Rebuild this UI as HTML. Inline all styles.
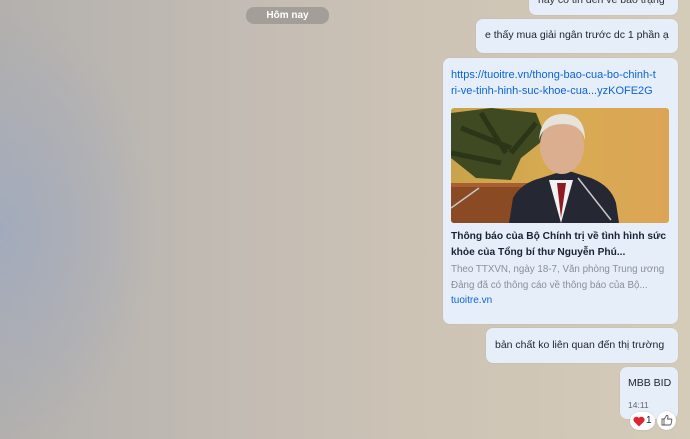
<!DOCTYPE html>
<html><head><meta charset="utf-8"><style>
*{margin:0;padding:0;box-sizing:border-box}
body{width:690px;height:439px;overflow:hidden;position:relative;font-family:"Liberation Sans",sans-serif;font-size:10.5px;color:#1d2430;
background:
radial-gradient(ellipse 160px 220px at 0px 230px, rgba(160,170,190,0.9), rgba(160,170,190,0) 100%),
linear-gradient(90deg,#b3b0ad 0%,#c3bcb4 35%,#cdc3b5 60%,#d5cbb9 100%);}
.b{position:absolute;background:#e6eefa;border-radius:7px;box-shadow:0 0 1px rgba(0,0,0,0.15);right:12px}
.t{position:absolute;white-space:nowrap}
.pill{position:absolute;left:246px;top:7px;width:83px;height:17px;border-radius:8px;background:#a39e98;color:#fff;font-weight:bold;font-size:10px;text-align:center;line-height:17px}
</style></head><body>
<div class="pill">Hôm nay</div>

<div class="b" style="left:529px;top:-10px;height:25px"><span class="t" style="left:9px;top:4px;color:#333">hãy có tin đến về báo trạng</span></div>

<div class="b" style="left:476px;top:19px;height:34px"><span class="t" style="left:9px;top:10px">e thấy mua giải ngân trước dc 1 phần ạ</span></div>

<div class="b" style="left:443px;top:58px;height:266px">
 <div class="t" style="left:8px;top:9px;line-height:16px;font-size:11px;color:#0a64d6">https://tuoitre.vn/thong-bao-cua-bo-chinh-t<br>ri-ve-tinh-hinh-suc-khoe-cua...yzKOFE2G</div>
 <svg style="position:absolute;left:8px;top:50px" width="218" height="115" viewBox="0 0 218 115">
  <defs><linearGradient id="g" x1="0" x2="1"><stop offset="0" stop-color="#c9a34a"/><stop offset="0.5" stop-color="#d8ab52"/><stop offset="1" stop-color="#dca556"/></linearGradient>
  <clipPath id="c"><rect width="218" height="115" rx="3"/></clipPath></defs>
  <g clip-path="url(#c)">
  <rect width="218" height="115" fill="url(#g)"/>
  <path d="M0 5 L40 0 L85 5 L95 30 L70 50 L60 72 L25 70 L0 50Z" fill="#3f4a22"/>
  <path d="M10 20 L60 40 M30 5 L55 45 M85 15 L60 45 M0 45 L50 55" stroke="#2b3518" stroke-width="5"/>
  <rect x="0" y="75" width="100" height="40" fill="#8a4a24"/>
  <rect x="0" y="75" width="100" height="4" fill="#a85e30"/>
  <path d="M58 115 L62 90 Q70 75 90 70 L115 62 L140 70 Q160 78 165 95 L168 115Z" fill="#252833"/>
  <path d="M98 72 L110 115 L122 72Z" fill="#f2f2f2"/>
  <path d="M106 75 L110 110 L115 75Z" fill="#8e1a22"/>
  <ellipse cx="111" cy="38" rx="22" ry="28" fill="#dcae90"/>
  <path d="M88 32 Q90 6 112 6 Q134 6 134 32 Q130 16 112 16 Q92 16 88 32Z" fill="#e6e2dc"/>
  <path d="M0 100 L28 80 M127 70 L160 112" stroke="#c8c8c8" stroke-width="1.5"/>
  </g></svg>
 <div class="t" style="left:8px;top:171px;line-height:16px;font-weight:bold;font-size:10.2px;color:#1a2233">Thông báo của Bộ Chính trị về tình hình sức<br>khỏe của Tổng bí thư Nguyễn Phú...</div>
 <div class="t" style="left:8px;top:204px;line-height:15.5px;font-size:9.8px;color:#8a909a">Theo TTXVN, ngày 18-7, Văn phòng Trung ương<br>Đảng đã có thông cáo về thông báo của Bộ...</div>
 <div class="t" style="left:8px;top:237px;font-size:10px;color:#0a64d6">tuoitre.vn</div>
</div>

<div class="b" style="left:486px;top:328px;height:35px"><span class="t" style="left:9px;top:11px">bản chất ko liên quan đến thị trường</span></div>

<div class="b" style="left:620px;top:367px;height:52px">
 <span class="t" style="left:8px;top:10px">MBB BID</span>
 <span class="t" style="left:8px;top:33px;font-size:8.5px;color:#666">14:11</span>
</div>
<div style="position:absolute;left:630px;top:412px;width:25px;height:18px;border-radius:9px;background:#fff;box-shadow:0 0 1px rgba(0,0,0,.3)">
 <svg style="position:absolute;left:3px;top:4px" width="12" height="11" viewBox="0 0 12 11"><path d="M6 10.5 L1 5.5 A2.7 2.7 0 0 1 6 2 A2.7 2.7 0 0 1 11 5.5Z" fill="#e0232e"/></svg>
 <span class="t" style="left:16px;top:3px;font-size:10px">1</span>
</div>
<div style="position:absolute;left:657px;top:411px;width:19px;height:19px;border-radius:50%;background:#fff;box-shadow:0 0 1px rgba(0,0,0,.3)">
 <svg style="position:absolute;left:4px;top:3px" width="12" height="12" viewBox="0 0 12 12"><path d="M1 5h2v6H1z M3 5.5 L5.5 1.5 Q7 1 7 2.5 L6.5 5 H10 Q11 5.2 10.8 6.3 L10 10 Q9.7 11 8.7 11 H3" fill="none" stroke="#555" stroke-width="0.9"/></svg>
</div>
</body></html>
